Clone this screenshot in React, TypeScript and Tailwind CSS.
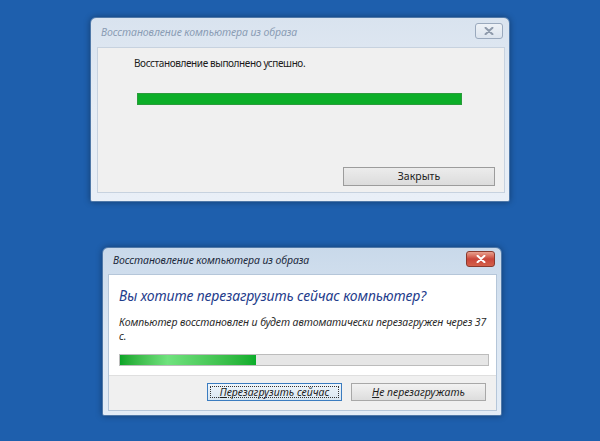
import React from "react";

const font = { fontFamily: '"Noto Sans", "Open Sans", sans-serif' };

function XIcon({ color }: { color: string }) {
  return (
    <svg width="10" height="8" viewBox="0 0 10 8">
      <path d="M1.5 0.8 L8.5 7.2 M8.5 0.8 L1.5 7.2" stroke={color} strokeWidth="2" strokeLinecap="round" />
    </svg>
  );
}

export default function App() {
  return (
    <div className="w-[600px] h-[441px] bg-[#1e5fad] overflow-hidden flex flex-col" style={font}>
      {/* Dialog 1 */}
      <div className="ml-[90px] mt-[17px] w-[420px] h-[185px] rounded-t-[6px] rounded-b-[2px] border border-[#4f78a8] bg-gradient-to-b from-[#d9e3ef] via-[#e6edf5] to-[#e9eff7] pl-[6px] pr-[4px] pb-[8px] flex flex-col shadow-[0_0_6px_rgba(0,0,0,0.35)]">
        <div className="h-[29px] flex items-center justify-between">
          <span className="ml-[4px] text-[10.5px] italic text-[#8a9cb4] tracking-[-0.1px]">Восстановление компьютера из образа</span>
          <div className="mt-[-4px] mr-[2px] w-[28px] h-[16px] rounded-[3px] border border-[#9aa9bd] bg-gradient-to-b from-[#eef2f7] to-[#dce4ee] flex items-center justify-center">
            <XIcon color="#8e9aab" />
          </div>
        </div>
        <div className="flex-1 bg-[#f0f0f0] border border-[#c7d2df] relative flex flex-col">
          <div className="ml-[36px] mt-[8px] text-[10px] tracking-[-0.4px] text-[#1a1a1a]">Восстановление выполнено успешно.</div>
          <div className="ml-[39px] mt-[22px] w-[325px] h-[12px] bg-[#0cae28] border border-[#2b9b3c]" />
          <div className="flex-1" />
          <div className="self-end mr-[9px] mb-[6px] w-[152px] h-[19px] border border-[#9c9c9c] bg-gradient-to-b from-[#ececec] to-[#dcdcdc] flex items-center justify-center text-[10.5px] text-[#222]">
            Закрыть
          </div>
        </div>
      </div>

      {/* Dialog 2 */}
      <div className="ml-[102px] mt-[45px] w-[400px] h-[169px] rounded-t-[6px] rounded-b-[2px] border border-[#4f78a8] bg-gradient-to-b from-[#c9d9ea] via-[#dce7f3] to-[#e3ecf6] pl-[5px] pr-[4px] pb-[4px] flex flex-col shadow-[0_0_6px_rgba(0,0,0,0.35)]">
        <div className="h-[26px] flex items-center justify-between">
          <span className="ml-[5px] text-[10.5px] italic text-[#1c2a3c] tracking-[-0.1px]">Восстановление компьютера из образа</span>
          <div className="mt-[-5px] mr-[2px] w-[29px] h-[16px] rounded-[3px] border border-[#8a3a2e] bg-gradient-to-b from-[#e8a08f] via-[#c9453a] to-[#d4604a] flex items-center justify-center">
            <XIcon color="#ffffff" />
          </div>
        </div>
        <div className="flex-1 bg-white border border-[#b5c6d9] flex flex-col">
          <div className="flex-1 flex flex-col">
            <div className="ml-[10px] mt-[10px] text-[14px] italic leading-[22px] text-[#1f3d8c] tracking-[-0.1px]">
              Вы хотите перезагрузить сейчас компьютер?
            </div>
            <div className="ml-[10px] w-[378px] mt-[8px] text-[10.5px] italic leading-[14px] text-[#2a2a2a] tracking-[-0.1px] whitespace-nowrap">
              Компьютер восстановлен и будет автоматически перезагружен через 37
              <br />
              с.
            </div>
            <div className="ml-[10px] mt-[11px] w-[370px] h-[12px] bg-[#e6e6e6] border border-[#bcbcbc] flex">
              <div className="w-[136px] h-full bg-gradient-to-r from-[#07a526] via-[#6fe27d] via-[35%] to-[#09ad2a]" />
            </div>
          </div>
          <div className="h-[35px] bg-[#f0f0f0] border-t border-[#dfdfdf] flex items-start justify-end pr-[10px] pt-[7px] gap-[9px]">
            <div className="w-[135px] h-[18px] border border-[#3b7cc0] bg-gradient-to-b from-[#eef5fb] to-[#d9e6f1] p-[2px]">
              <div className="w-full h-full border border-dotted border-[#333] flex items-center justify-center text-[10.5px] italic text-[#1e1e1e] leading-none">
                <span><span className="underline">П</span>ерезагрузить сейчас</span>
              </div>
            </div>
            <div className="w-[135px] h-[18px] border border-[#a8a8a8] bg-gradient-to-b from-[#f2f2f2] to-[#dddddd] flex items-center justify-center text-[10.5px] italic text-[#1e1e1e] leading-none">
              <span><span className="underline">Н</span>е перезагружать</span>
            </div>
          </div>
        </div>
      </div>
    </div>
  );
}
